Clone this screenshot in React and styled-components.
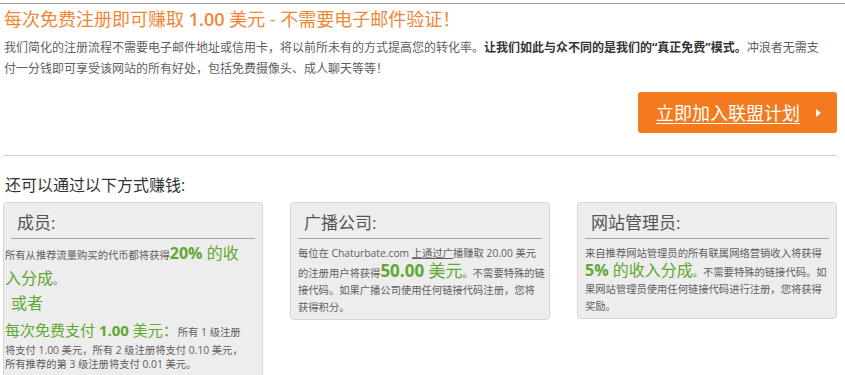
import React from "react";
import styled, { createGlobalStyle } from "styled-components";

const Global = createGlobalStyle`
  html, body { margin: 0; padding: 0; background: #fff; }
  body { font-family: "Open Sans", "Noto Sans CJK SC", sans-serif; color: #5e5e5e; }
  * { box-sizing: border-box; }
`;

const Page = styled.div`
  width: 845px;
  margin-top: 3px;
  border-top: 1px solid #9a9a9a;
  padding: 0 8px 0 3px;
`;

const Title = styled.h1`
  margin: 3px 0 0 1px;
  font-size: 18px;
  line-height: 24px;
  font-weight: 400;
  color: #ef8738;
  white-space: nowrap;
`;

const Num = styled.span`
  font-weight: 600;
`;

const Intro = styled.p`
  margin: 6px 0 0 1px;
  font-size: 12px;
  line-height: 21px;
  color: #5e5e5e;
  white-space: nowrap;
  strong { color: #333; font-weight: 700; }
`;

const CtaRow = styled.div`
  display: flex;
  justify-content: flex-end;
  margin-top: 13px;
`;

const CtaButton = styled.a`
  display: flex;
  align-items: center;
  justify-content: space-between;
  width: 199px;
  height: 41px;
  padding: 0 12px 0 18px;
  background: #f47a20;
  border-radius: 3px;
  color: #fff;
  font-size: 18px;
  line-height: 24px;
  text-decoration: none;
  cursor: pointer;
`;

const CtaLabel = styled.span`
  text-decoration: underline;
  text-underline-offset: 3px;
  text-decoration-thickness: 1px;
`;

const Caret = styled.span`
  width: 0;
  height: 0;
  border-top: 4px solid transparent;
  border-bottom: 4px solid transparent;
  border-left: 5px solid #fff;
  margin-right: 4px;
`;

const Divider = styled.hr`
  margin: 22px 0 0 0;
  border: 0;
  border-top: 1px solid #cfcfcf;
`;

const SubTitle = styled.h2`
  margin: 18px 0 0 2px;
  font-size: 16px;
  line-height: 22px;
  font-weight: 400;
  color: #333;
`;

const Cards = styled.div`
  display: grid;
  grid-template-columns: repeat(3, 260px);
  justify-content: space-between;
  align-items: start;
  margin-top: 6px;
`;

const Card = styled.section`
  background: #ededed;
  border: 1px solid #d6d6d6;
  border-radius: 4px;
  padding: 0 7px ${(p) => p.$pb ?? 3}px 7px;
`;

const CardTitle = styled.h3`
  margin: 0;
  padding: 8px 0 3px 6px;
  font-size: 17px;
  line-height: 24px;
  font-weight: 400;
  color: #555;
  border-bottom: 1px solid #a8a8a8;
`;

const Body = styled.p`
  margin: ${(p) => p.$mt ?? 6}px 0 0 ${(p) => p.$ml || 0}px;
  font-size: 10.3px;
  line-height: ${(p) => p.$lh || 17}px;
  color: #5e5e5e;
  white-space: nowrap;
`;

const Green = styled.span`
  color: #5fa832;
  font-size: ${(p) => p.$size || 16}px;
  font-weight: ${(p) => (p.$bold ? 700 : 400)};
`;

const Link = styled.span`
  text-decoration: underline;
`;

export default function App() {
  return (
    <>
      <Global />
      <Page>
        <Title>
          每次免费注册即可赚取 <Num>1.00</Num> 美元 - 不需要电子邮件验证！
        </Title>
        <Intro>
          我们简化的注册流程不需要电子邮件地址或信用卡，将以前所未有的方式提高您的转化率。
          <strong>让我们如此与众不同的是我们的“真正免费”模式。</strong>冲浪者无需支
          <br />
          付一分钱即可享受该网站的所有好处，包括免费摄像头、成人聊天等等！
        </Intro>
        <CtaRow>
          <CtaButton>
            <CtaLabel>立即加入联盟计划</CtaLabel>
            <Caret />
          </CtaButton>
        </CtaRow>
        <Divider />
        <SubTitle>还可以通过以下方式赚钱:</SubTitle>
        <Cards>
          <Card $pb={14}>
            <CardTitle>成员:</CardTitle>
            <Body $mt={3} $ml={-6} $lh={23}>
              所有从推荐流量购买的代币都将获得<Green $bold>20%</Green>
              <Green> 的收</Green>
              <br />
              <Green>入分成</Green>。
            </Body>
            <Body $mt={0} $ml={0} $lh={22}>
              <Green>或者</Green>
            </Body>
            <Body $mt={5} $ml={-6} $lh={18}>
              <Green $size={15}>每次免费支付 </Green>
              <Green $size={15} $bold>1.00</Green>
              <Green $size={15}> 美元：</Green>所有 1 级注册
            </Body>
            <Body $mt={3} $ml={-6} $lh={13.5}>
              将支付 1.00 美元，所有 2 级注册将支付 0.10 美元，
              <br />
              所有推荐的第 3 级注册将支付 0.01 美元。
            </Body>
          </Card>
          <Card>
            <CardTitle>广播公司:</CardTitle>
            <Body>
              每位在 Chaturbate.com <Link>上通过广</Link>播赚取 20.00 美元
              <br />
              的注册用户将获得<Green $size={17} $bold>50.00</Green>
              <Green $size={17}> 美元</Green>。不需要特殊的链
              <br />
              接代码。如果广播公司使用任何链接代码注册，您将
              <br />
              获得积分。
            </Body>
          </Card>
          <Card>
            <CardTitle>网站管理员:</CardTitle>
            <Body>
              来自推荐网站管理员的所有联属网络营销收入将获得
              <br />
              <Green $bold>5%</Green>
              <Green> 的收入分成</Green>。不需要特殊的链接代码。如
              <br />
              果网站管理员使用任何链接代码进行注册，您将获得
              <br />
              奖励。
            </Body>
          </Card>
        </Cards>
      </Page>
    </>
  );
}
